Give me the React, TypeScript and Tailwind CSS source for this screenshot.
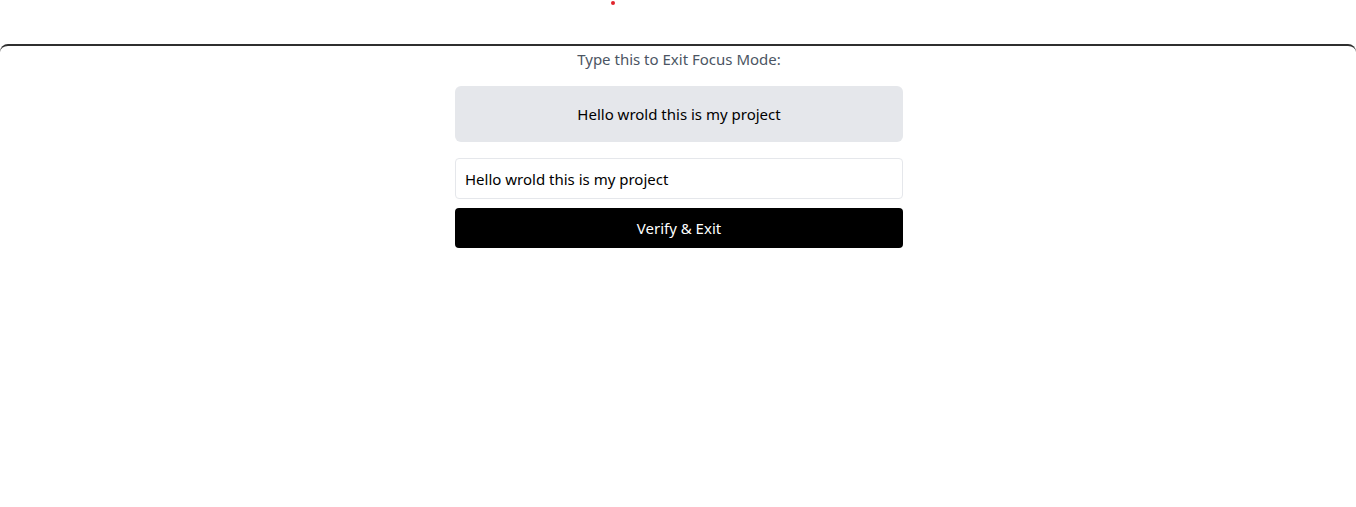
import React, { useState } from "react";

export default function App() {
  const [value, setValue] = useState("Hello wrold this is my project");
  const target = "Hello wrold this is my project";

  return (
    <div className="relative min-h-[507px] bg-white font-['Noto_Sans','Liberation_Sans',sans-serif] text-[15px]">
      {/* small red marker */}
      <div className="absolute left-[611px] top-px h-1 w-1 rounded-full bg-[#e0242c]" />

      <div className="pt-[44px]">
        <div className="min-h-[463px] rounded-t-[8px] border-t-2 border-[#2f2f2f]">
          <div className="mx-auto flex w-[448px] translate-x-px flex-col">
            <p className="mt-px text-center leading-6 text-[#4b5563]">
              Type this to Exit Focus Mode:
            </p>
            <div className="mt-[15px] flex h-[56px] items-center justify-center rounded-md bg-[#e5e7eb] text-black">
              {target}
            </div>
            <input
              type="text"
              value={value}
              onChange={(e) => setValue(e.target.value)}
              className="mt-[16px] h-[41px] w-full rounded border border-[#e5e7eb] px-[9px] text-black outline-none"
            />
            <button
              type="button"
              className="mt-[9px] h-10 w-full rounded bg-black text-white"
            >
              Verify &amp; Exit
            </button>
          </div>
        </div>
      </div>
    </div>
  );
}
